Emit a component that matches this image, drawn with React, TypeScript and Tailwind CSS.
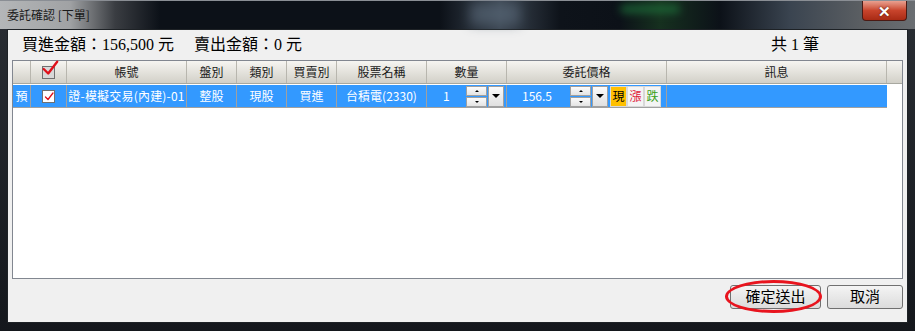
import React from "react";

const cols = [18, 36, 120, 50, 50, 50, 90, 80, 160, 220, 14];
const heads = ["", "check", "帳號", "盤別", "類別", "買賣別", "股票名稱", "數量", "委託價格", "訊息", ""];

const Check = ({ className }: { className: string }) => (
  <svg viewBox="0 0 20 20" className={className}>
    <path d="M3 10 L8 15 L18 2" fill="none" stroke="#e0101a" strokeWidth="2.6" strokeLinecap="round" strokeLinejoin="round" />
  </svg>
);

const Spinner = () => (
  <div className="flex flex-col gap-[1px]">
    <div className="flex h-[10px] w-[21px] items-center justify-center border border-[#a0a0a0] bg-gradient-to-b from-[#fbfbfb] to-[#e4e4e4]">
      <div className="h-0 w-0 border-x-[2px] border-b-[2px] border-x-transparent border-b-black" />
    </div>
    <div className="flex h-[10px] w-[21px] items-center justify-center border border-[#a0a0a0] bg-gradient-to-b from-[#fbfbfb] to-[#e4e4e4]">
      <div className="h-0 w-0 border-x-[2px] border-t-[2px] border-x-transparent border-t-black" />
    </div>
  </div>
);

const Drop = () => (
  <div className="flex h-[21px] w-[16px] items-center justify-center border border-[#a0a0a0] bg-gradient-to-b from-[#fbfbfb] to-[#e0e0e0]">
    <div className="h-0 w-0 border-x-[4px] border-t-[4px] border-x-transparent border-t-black" />
  </div>
);

export default function App() {
  return (
    <div className="relative h-[331px] w-[915px] overflow-hidden bg-gradient-to-b from-[#2a2e34] to-[#14171c] font-['Noto_Sans_CJK_TC',sans-serif]">
      {/* title bar */}
      <div className="relative h-[29px] border-t border-[#8a8e94] bg-[linear-gradient(90deg,#b4b6b8_0px,#a0a2a4_70px,#3a3d42_115px,#0c1118_160px,#0c1118_440px,#3c4652_500px,#0e131a_560px,#0c1118_620px,#16301f_660px,#0c1118_720px,#3a4450_790px,#5a5e62_860px,#6a6e72_915px)]">
        <div className="absolute left-[620px] top-[4px] h-[8px] w-[60px] rounded-full bg-[#1f7a3e] opacity-70 blur-[4px]" />
        <div className="absolute left-[470px] top-[2px] h-[22px] w-[50px] bg-[#5a6a7a] opacity-60 blur-[6px]" />
        <div className="absolute left-[7px] top-[6px] text-[12px] leading-[16px] text-[#1a1a1a]">委託確認 [下單]</div>
        <div className="absolute left-[862px] top-0 flex h-[20px] w-[45px] items-center justify-center rounded-b-[4px] border border-t-0 border-[#4a1a14] bg-gradient-to-b from-[#e8a090] via-[#c8442c] to-[#a82a14]">
          <span className="text-[15px] font-bold leading-none text-white [text-shadow:0_0_2px_#3a0a04]">✕</span>
        </div>
      </div>

      {/* client area */}
      <div className="mx-[7px] flex h-[294px] flex-col border border-[#1e2226] bg-[#f0f0f0]">
        <div className="flex h-[30px] items-center pl-[14px] pr-[88px] font-['Liberation_Serif','Noto_Sans_CJK_TC',serif] text-[16px] text-black">
          <span>買進金額：156,500 元</span>
          <span className="ml-[20px]">賣出金額：0 元</span>
          <span className="ml-auto">共 1 筆</span>
        </div>

        <div className="mx-[4px] h-[219px] border border-[#828790] bg-white text-[12px]">
          {/* header */}
          <div className="flex h-[23px] border-b border-[#a8a8a0] bg-gradient-to-b from-[#f6f5f1] to-[#d2d0c8]">
            {cols.map((w, i) => (
              <div
                key={i}
                style={{ width: w }}
                className="flex items-center justify-center border-r border-[#b8b6ae] text-[#1a1a1a] last:border-r-0"
              >
                {heads[i] === "check" ? (
                  <div className="relative h-[13px] w-[13px] border border-[#707070] bg-[#d8d8d8]">
                    <Check className="absolute -right-[5px] -top-[7px] h-[18px] w-[18px]" />
                  </div>
                ) : (
                  heads[i]
                )}
              </div>
            ))}
          </div>

          {/* data row */}
          <div className="mt-[1px] flex h-[23px]">
            <div className="flex h-[23px] w-[874px] border-b border-[#a0a0a0] bg-[#3399ff] text-white">
              <div className="flex w-[18px] items-center justify-center border-r border-[#a0a0a0]">預</div>
              <div className="flex w-[36px] items-center justify-center border-r border-[#a0a0a0]">
                <div className="relative h-[13px] w-[13px] border border-[#707070] bg-white">
                  <Check className="absolute left-[1px] top-[1px] h-[10px] w-[10px]" />
                </div>
              </div>
              <div className="flex w-[120px] items-center justify-center border-r border-[#a0a0a0] tracking-[0.2px]">證-模擬交易(內建)-01</div>
              <div className="flex w-[50px] items-center justify-center border-r border-[#a0a0a0]">整股</div>
              <div className="flex w-[50px] items-center justify-center border-r border-[#a0a0a0]">現股</div>
              <div className="flex w-[50px] items-center justify-center border-r border-[#a0a0a0]">買進</div>
              <div className="flex w-[90px] items-center justify-center border-r border-[#a0a0a0]">台積電(2330)</div>
              <div className="flex w-[80px] items-center border-r border-[#a0a0a0]">
                <span className="ml-[16px] w-[23px]">1</span>
                <Spinner />
                <div className="ml-[1px]">
                  <Drop />
                </div>
              </div>
              <div className="flex w-[160px] items-center border-r border-[#a0a0a0]">
                <span className="ml-[15px] w-[48px]">156.5</span>
                <Spinner />
                <div className="ml-[1px]">
                  <Drop />
                </div>
                <div className="ml-[2px] flex h-[21px] w-[17px] items-center justify-center border border-[#d8d8d8] bg-[#ffc000] text-black">現</div>
                <div className="flex h-[21px] w-[17px] items-center justify-center border border-[#d8d8d8] bg-[#f4f4f4] text-[#e0203a]">漲</div>
                <div className="flex h-[21px] w-[17px] items-center justify-center border border-[#d8d8d8] bg-[#f4f4f4] text-[#3aa020]">跌</div>
              </div>
              <div className="w-[219px]" />
            </div>
          </div>
        </div>

        <div className="mt-[6px] flex justify-end gap-[6px] pr-[4px]">
          <div className="relative">
            <button className="flex h-[24px] w-[91px] items-center justify-center rounded-[3px] border border-[#707070] bg-gradient-to-b from-[#f4f4f4] to-[#dcdcdc] font-['Liberation_Serif','Noto_Sans_CJK_TC',serif] text-[15px] text-black">
              確定送出
            </button>
            <div className="absolute -left-[5px] -top-[5px] h-[33px] w-[97px] rounded-[50%] border-[3px] border-[#e8141e]" />
          </div>
          <button className="flex h-[24px] w-[76px] items-center justify-center rounded-[3px] border border-[#707070] bg-gradient-to-b from-[#f4f4f4] to-[#dcdcdc] font-['Liberation_Serif','Noto_Sans_CJK_TC',serif] text-[15px] text-black">
            取消
          </button>
        </div>
      </div>
    </div>
  );
}
